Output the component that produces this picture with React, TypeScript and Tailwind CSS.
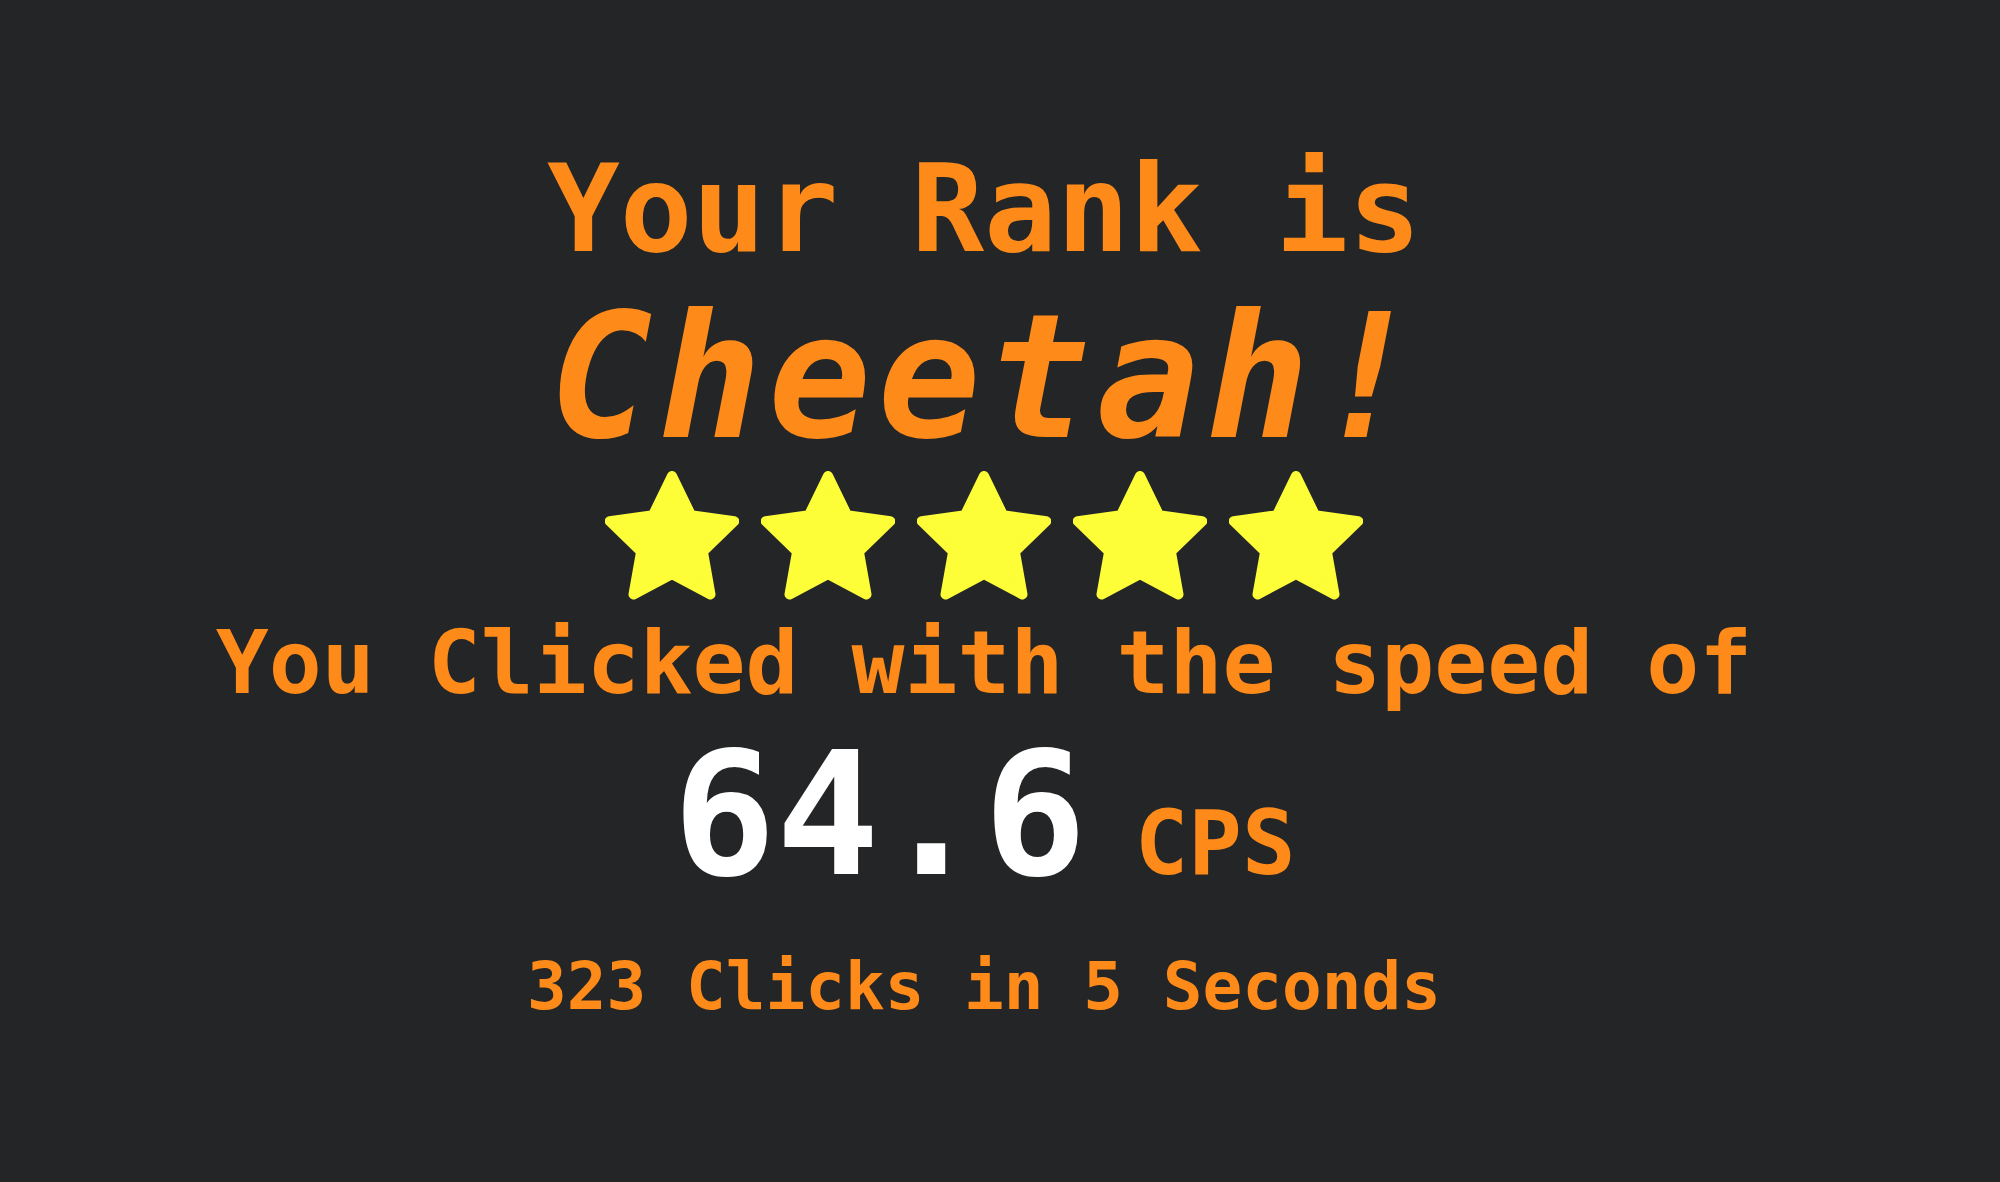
const Star = () => (
  <svg width="134" height="129" viewBox="0 0 134 129" className="block">
    <polygon
      points="67,5 86.1,44.21 129.3,50.26 97.91,80.54 105.5,123.49 67,103 28.5,123.49 36.09,80.54 4.7,50.26 47.9,44.21"
      fill="#fdfd38"
      stroke="#fdfd38"
      strokeWidth="10"
      strokeLinejoin="round"
    />
  </svg>
);

export default function App() {
  return (
    <div className="min-h-screen w-full bg-[#232527] font-['DejaVu_Sans_Mono',monospace] font-bold">
      <div className="flex flex-col items-center pr-[32px] pt-[149px]">
        {/* Rank */}
        <div className="text-[121px] leading-none text-[#fd8a19]">Your Rank is</div>
        <div className="mt-[22px] pl-[6px] text-[172px] italic leading-none tracking-[6px] text-[#fd8a19]">Cheetah!</div>

        {/* Stars */}
        <div className="mt-[7px] flex gap-[22px]">
          {[0, 1, 2, 3, 4].map((i) => (
            <Star key={i} />
          ))}
        </div>

        {/* Speed */}
        <div className="mt-[19px] text-[88px] leading-none text-[#fd8a19]">You Clicked with the speed of</div>
        <div className="mt-[22px] flex items-baseline leading-none">
          <span className="text-[172px] text-white">64.6</span>
          <span className="ml-[48px] text-[89px] text-[#fd8a19]">CPS</span>
        </div>
        <div className="mt-[53px] text-[66px] leading-none text-[#fd8a19]">323 Clicks in 5 Seconds</div>
      </div>
    </div>
  );
}
